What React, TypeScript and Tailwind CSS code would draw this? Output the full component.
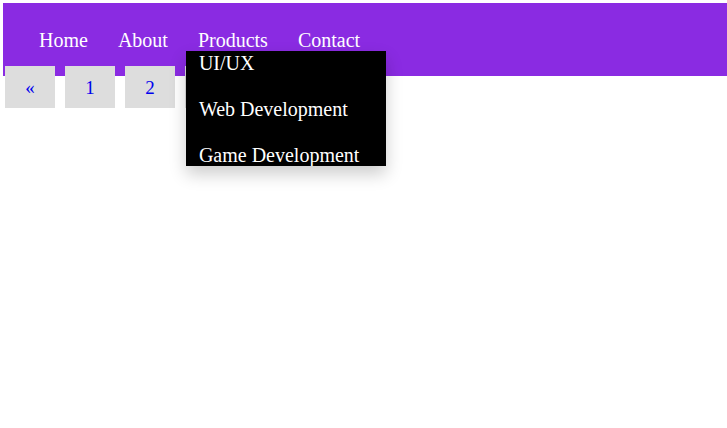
const navItems = ['Home', 'About', 'Products', 'Contact']
const productLinks = ['UI/UX', 'Web Development', 'Game Development']
const pages = ['«', '1', '2', '3', '4', '»']

export default function App() {
  return (
    <div className="min-h-[428px] bg-white font-['Liberation_Serif',serif]">
      <nav className="ml-[3px] mt-[3px] h-[73px] bg-[#8a2be2]">
        <ul className="flex pl-[21px] pt-[26px] text-[20px] leading-[23px] text-white">
          {navItems.map((item) => (
            <li key={item} className="relative px-[15px]">
              <a href="#" className="whitespace-nowrap">{item}</a>
              {item === 'Products' && (
                <div className="absolute left-[3px] top-[22px] z-10 h-[115px] w-[200px] overflow-hidden bg-black pt-[1px] shadow-[0_8px_16px_0_rgba(0,0,0,0.2)]">
                  {productLinks.map((link) => (
                    <a key={link} href="#" className="block whitespace-nowrap pb-[23px] pl-[13px] leading-[23px] text-white">
                      {link}
                    </a>
                  ))}
                </div>
              )}
            </li>
          ))}
        </ul>
      </nav>

      <div className="-mt-[10px] ml-[5px] flex gap-[10px]">
        {pages.map((p) => (
          <a
            key={p}
            href="#"
            className="flex h-[42px] w-[50px] items-center justify-center bg-[#dddddd] pt-[2px] text-[19px] text-[#0000ee]"
          >
            {p}
          </a>
        ))}
      </div>
    </div>
  )
}
